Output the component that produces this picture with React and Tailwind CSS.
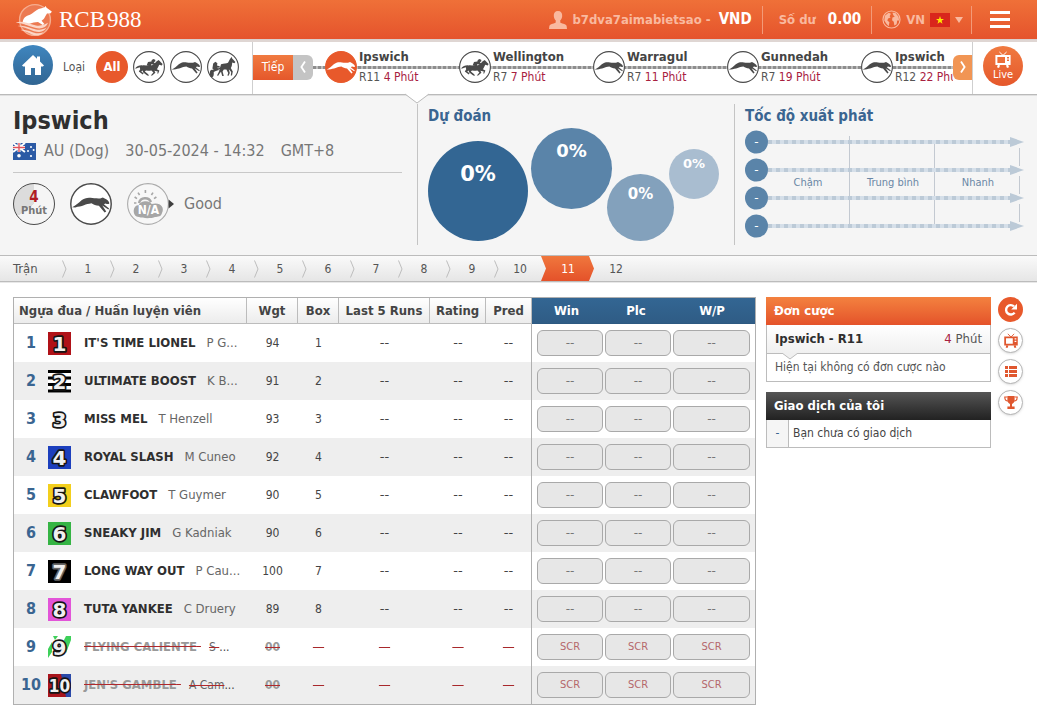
import React, { useState } from 'react';

const upcoming = [
  { venue: 'Ipswich', race: 'R11', time: '4 Phút', type: 'dog', active: true },
  { venue: 'Wellington', race: 'R7', time: '7 Phút', type: 'horse' },
  { venue: 'Warragul', race: 'R7', time: '11 Phút', type: 'dog' },
  { venue: 'Gunnedah', race: 'R7', time: '19 Phút', type: 'dog' },
  { venue: 'Ipswich', race: 'R12', time: '22 Phút', type: 'dog' },
];

const runners = [
  { no: 1, name: "IT'S TIME LIONEL", trainer: 'P G...', wgt: '94', box: '1' },
  { no: 2, name: 'ULTIMATE BOOST', trainer: 'K B...', wgt: '91', box: '2' },
  { no: 3, name: 'MISS MEL', trainer: 'T Henzell', wgt: '93', box: '3' },
  { no: 4, name: 'ROYAL SLASH', trainer: 'M Cuneo', wgt: '92', box: '4' },
  { no: 5, name: 'CLAWFOOT', trainer: 'T Guymer', wgt: '90', box: '5' },
  { no: 6, name: 'SNEAKY JIM', trainer: 'G Kadniak', wgt: '90', box: '6' },
  { no: 7, name: 'LONG WAY OUT', trainer: 'P Cau...', wgt: '100', box: '7' },
  { no: 8, name: 'TUTA YANKEE', trainer: 'C Druery', wgt: '89', box: '8' },
  { no: 9, name: 'FLYING CALIENTE', trainer: 'S\u00a0', wgt: '00', scratched: true },
  { no: 10, name: "JEN'S GAMBLE", trainer: 'A Cam', wgt: '00', scratched: true },
];

const races = [1, 2, 3, 4, 5, 6, 7, 8, 9, 10, 11, 12];

const rugColors = {
  1: '#b01218',
  2: '#ffffff',
  3: 'none',
  4: '#1c3fbd',
  5: '#f3cf1d',
  6: '#35b444',
  7: '#000000',
  8: '#e254d8',
  9: '#ffffff',
  10: '#a8141c',
};

const Silhouette = ({ type }) => {
  if (type === 'horse') {
    return (
      <g fill="currentColor">
        <path d="M2 17.4 C4 15 6.4 14.2 9.4 14.4 C12 14 14 14.8 17 14.6 C20 14.4 21.6 12.8 23 11 C24 9.8 25 9.6 25.6 9 L26.4 9.8 L29.6 13 L28.8 14.4 L26.2 13.8 C25.4 15.4 25 17 23.8 18.2 L26.4 19.6 L25.2 22.6 L24.2 22.4 L24.8 20.4 L21.4 19.8 L22.4 21.8 L19.2 24.4 L17.8 24.6 L20.4 21.6 L18.4 19.6 C16.4 19.8 14.6 19.4 13 19.4 L11.8 20.6 L15.2 23.2 L16 24.8 L14.2 24.6 L10 21.2 L9.8 19.6 L8.2 20.4 L10.6 22.2 L9.8 23.4 L5.8 20.4 L7.2 18.2 L6.8 16.2 L3.2 17.4 Z" />
        <path d="M13.6 14.4 L15 11 L18.4 10.6 L18.8 9 L20.4 8 L22.2 8.8 L22.4 10.2 L20.8 11.2 L22.4 12.8 L21 14 L18.4 13 L18 15.4 Z" />
      </g>
    );
  }
  if (type === 'harness') {
    return (
      <g fill="currentColor">
        <path d="M14 13.2 C17 12.6 19.4 12.8 21 11.8 C22 10 22.6 8.4 23.8 7 L24.4 5.8 L25.2 7.4 L28.4 11 L27.4 12.2 L25.2 11.4 C25 13.6 25 15.4 23.8 17 L25.8 20.4 L25 24.6 L23.8 24.6 L24.2 21 L21.8 18.2 L22.8 22 L21.6 24.8 L20.4 24.6 L21.2 22 L19.4 18.6 L16.8 18.4 L15.6 20.6 L16.8 25 L15.2 25 L14 20.8 L12.6 22.6 L11.2 24.8 L10 24.4 L12 20.6 L12.8 17.4 Z" />
        <path d="M6.2 12.4 L8.4 10.8 L10.4 12.2 L10 14.4 L12.8 15.2 L12.6 16.8 L10.4 16.6 L11.6 19.2 L7.6 19.4 L5.4 17.4 Z" />
        <ellipse cx="4.8" cy="22.4" rx="2" ry="3.6" />
        <path d="M4 19.2 L14 16.4 V17.6 L4.6 22 Z" />
      </g>
    );
  }
  return (
    <path
      fill="currentColor"
      d="M1.6 18.4 C4.4 17.2 6.6 15.2 8.8 13.2 C11 11.2 14 10.8 17 11.4 C19 11.8 21.4 11.6 23 11.8 L25 11 L26.8 12 C28.4 12.8 29.6 13.8 30 15.4 C29.4 16.4 28.4 16 27 15.6 L25.8 16.2 L29.8 19.4 L29.2 20.2 L24.6 17.2 L27.6 21.8 L26.4 22.4 L22 17.4 C19.8 17 18 16.6 16.4 15.4 C14 16 12.4 15.8 10.6 17 C8.6 17.8 6.4 18 4 18.6 Z"
    />
  );
};

const RaceTypeIcon = ({ type, active, className }) => (
  <svg viewBox="0 0 32 32" className={className} aria-hidden="true">
    <circle cx="16" cy="16" r="15.4" fill={active ? '#e8592b' : '#ffffff'} stroke={active ? '#e8592b' : '#4a4a4a'} strokeWidth="1.1" />
    <Silhouette type={type} />
  </svg>
);

const TvIcon = ({ className }) => (
  <svg viewBox="0 0 18 18" className={className} fill="none" stroke="currentColor" aria-hidden="true">
    <path d="M5.4 1 L9 4.4 L12.6 1" strokeWidth="1" />
    <path fillRule="evenodd" d="M1.4 4 H16.6 V14 H1.4 Z M3.4 6 V12 H11 V6 Z M13 6 H15 V7.4 H13 Z M13 8.6 H15 V10 H13 Z" fill="currentColor" stroke="none" />
    <path d="M5 14 L4 16.6 M13 14 L14 16.6" strokeWidth="2.2" />
  </svg>
);

const Logo = () => (
  <a href="#home" className="flex items-center gap-1.5 text-white">
    <svg viewBox="0 0 38 34" className="h-[34px] w-[38px]" aria-hidden="true">
      <circle cx="20" cy="17" r="15.4" fill="#ec7a52" stroke="#f6ad8f" strokeWidth="1.4" />
      <path d="M7.6 20 C8 14.4 11 13 15 11.8 C18 10.6 20 7.6 23.6 6 L29.4 4.4 L30.6 3 L31.6 4.8 L36.8 8.4 L35.8 10.2 L32 10.4 L30.2 13.6 C29.4 16 27.6 17 26.6 17.8 L29.4 21 L27.8 22 L23 19 C20 19.4 17.4 19.4 15.4 20.6 L11 21.6 Z" fill="#fff" />
      <path d="M0.6 19.4 C8 17.2 15 21 21 22.4 C26 23.4 30 21.4 33 19.8 C31 25 26 26.4 20 24.8 C13 22.6 7 20 0.6 19.4 Z" fill="#fbd5c6" />
      <path d="M2.6 23 C9 21.6 15 25 21 26.4 C25 27.2 29 26.4 31.6 24.6 C29 29 25 29.8 19 28.2 C13 26 8 23.4 2.6 23 Z" fill="#fbd5c6" />
      <path d="M5.6 27 C11 26.2 16 29.2 21 30.2 C24 30.6 26 30.2 28.4 29.2 C25 33 21 32.8 17 31.4 C13 29.8 9 27.6 5.6 27 Z" fill="#fbd5c6" />
    </svg>
    <span className="flex gap-0.5 font-['Liberation_Serif',serif] text-[23px] leading-8">
      <span>RCB</span>
      <span>988</span>
    </span>
  </a>
);

const TopBar = () => (
  <header className="flex h-10 items-center justify-between border-b border-[#d9cfcc] bg-linear-to-b from-[#ef7038] to-[#e5532c] pl-[15px] text-[#f9b99f]">
    <Logo />
    <div className="flex items-center text-[13px] font-bold">
      <svg viewBox="0 0 18 18" className="mr-[5px] size-[18px]" fill="currentColor" aria-hidden="true">
        <path d="M9 0 C12 0 13.4 2 13.2 5 C13 7.4 12.2 8.6 11.2 9.6 L11.4 11.8 C14 12.8 17 13.4 17.6 14.8 L18 18 H0 L0.4 14.8 C1 13.4 4 12.8 6.6 11.8 L6.8 9.6 C5.8 8.6 5 7.4 4.8 5 C4.6 2 6 0 9 0 Z" />
      </svg>
      <span>b7dva7aimabietsao -</span>
      <span className="ml-2 text-[15px] text-white">VND</span>
      <span className="mx-2.5 h-7 w-px bg-[#f39a78]" />
      <span className="ml-1.5">Số dư</span>
      <span className="ml-3 text-[15px] text-white">0.00</span>
      <span className="mx-2.5 h-7 w-px bg-[#f39a78]" />
      <button type="button" className="flex items-center gap-[5px]">
        <svg viewBox="0 0 20 20" className="size-[19px]" fill="none" aria-hidden="true">
          <circle cx="10" cy="10" r="9" stroke="currentColor" strokeWidth="1.2" />
          <path d="M3 6 L7 3 L9.4 4 L8 6.6 L9 8 L6.4 9 L5.6 11 L7.8 13 L7 17 L4.6 14.4 L2.4 11 Z" fill="currentColor" />
          <path d="M11 3 L14 3 L17.4 7 L18 11 L16 11 L15.4 15 L13 16.4 L12.4 12.4 L10.6 10.8 L11 8 L13.4 7 L12 5.6 Z" fill="currentColor" />
        </svg>
        <span>VN</span>
        <svg viewBox="0 0 20 14" className="h-3.5 w-5" aria-hidden="true">
          <rect width="20" height="14" fill="#d9251c" />
          <path d="M10 3 L11 6 H14 L11.6 7.8 L12.5 10.8 L10 9 L7.5 10.8 L8.4 7.8 L6 6 H9 Z" fill="#ffe600" />
        </svg>
        <svg viewBox="0 0 8 6" className="h-1.5 w-2" fill="currentColor" aria-hidden="true">
          <path d="M0 0 H8 L4 6 Z" />
        </svg>
      </button>
      <span className="ml-2 h-7 w-px bg-[#f39a78]" />
      <button type="button" aria-label="Menu" className="mr-[27px] ml-[18px] flex w-5 flex-col gap-1">
        <span className="h-[3px] bg-white" />
        <span className="h-[3px] bg-white" />
        <span className="h-[3px] bg-white" />
      </button>
    </div>
  </header>
);

const NavBar = () => (
  <nav className="relative flex h-[55px] items-center border-t-2 border-b border-t-[#dfd6d3] border-b-[#bababa] bg-white">
    <div className="flex h-full w-[253px] shrink-0 items-center border-r border-[#cfcfcf] pb-0.5 pl-[13px]">
      <a href="#home" aria-label="Home" className="mt-[3px] flex size-10 items-center justify-center self-start rounded-full bg-linear-to-b from-[#3f86bf] to-[#316592] text-white">
        <svg viewBox="0 0 22 20" className="h-5 w-[22px]" fill="currentColor" aria-hidden="true">
          <path d="M11 0 L15 3.8 V1.4 H18 V6.6 L22 10.4 L20.8 11.4 H19 V20 H13 V13 H9 V20 H3 V11.4 H1.2 L0 10.4 Z" />
        </svg>
      </a>
      <span className="ml-2.5 text-xs text-[#555]">Loại</span>
      <div className="ml-[11px] flex gap-[5px] text-[#4a4a4a]">
        <button type="button" className="size-8 rounded-full bg-[#e8592b] text-[13px] font-bold text-white">All</button>
        <button type="button" aria-label="Horse"><RaceTypeIcon type="horse" className="size-8" /></button>
        <button type="button" aria-label="Dog"><RaceTypeIcon type="dog" className="size-8" /></button>
        <button type="button" aria-label="Harness"><RaceTypeIcon type="harness" className="size-8" /></button>
      </div>
    </div>
    <button type="button" className="mb-0.5 h-[25px] w-10 shrink-0 bg-linear-to-b from-[#f07a40] to-[#e5572b] text-xs text-white">Tiếp</button>
    <button type="button" aria-label="Previous" className="mb-0.5 flex h-[25px] w-5 shrink-0 items-center justify-center rounded-r-md bg-[#c4c4c4] text-white">
      <svg viewBox="0 0 6 12" className="h-3 w-1.5" fill="none" stroke="currentColor" strokeWidth="1.8" aria-hidden="true"><path d="M5 0.5 L1.4 6 L5 11.5" /></svg>
    </button>
    <div className="relative h-full min-w-0 flex-1 overflow-hidden">
      <div className="absolute inset-x-0 top-6 h-[3px] bg-[repeating-linear-gradient(90deg,#8d8d8d_0_3px,#bdbdbd_3px_5px)]" />
      <ul className="relative flex h-full items-center pb-0.5 pl-3">
        {upcoming.map((item, i) => (
          <li key={i} className="w-[134px] shrink-0">
            <a href="#race" className="flex items-center gap-0.5">
              <RaceTypeIcon
                type={item.type}
                active={item.active}
                className={item.active ? 'size-8 shrink-0 text-white' : 'size-8 shrink-0 text-[#4a4a4a]'}
              />
              <span className="flex flex-col text-xs leading-5">
                <span className="text-[13px] leading-5 font-bold text-[#444]">{item.venue}</span>
                <span className="text-[#555]">
                  {item.race} <span className="text-[#a8203f]">{item.time}</span>
                </span>
              </span>
            </a>
          </li>
        ))}
      </ul>
    </div>
    <button type="button" aria-label="Next" className="mb-0.5 flex h-[25px] w-[19px] shrink-0 items-center justify-center rounded-l-md bg-[#f19554] text-white">
      <svg viewBox="0 0 6 12" className="h-3 w-1.5" fill="none" stroke="currentColor" strokeWidth="1.8" aria-hidden="true"><path d="M1 0.5 L4.6 6 L1 11.5" /></svg>
    </button>
    <div className="flex h-full w-[65px] shrink-0 items-start border-l border-[#cfcfcf] pt-1 pl-2.5">
      <button type="button" className="flex size-10 flex-col items-center justify-center rounded-full bg-linear-to-b from-[#f07a40] to-[#e5572b] text-[11px] leading-3 text-white">
        <TvIcon className="size-[18px]" />
        Live
      </button>
    </div>
    <svg viewBox="0 0 26 11" className="absolute top-[51px] left-[404px] z-10 h-[11px] w-[26px]" aria-hidden="true">
      <path d="M0 0 L13 10 L26 0 Z" fill="#fff" />
      <path d="M1 1 L13 10 L25 1" fill="none" stroke="#bababa" />
    </svg>
  </nav>
);

const MeetingInfo = () => (
  <section className="min-w-0 flex-1 pr-[15px] pl-[13px] text-[#777]">
    <div className="border-b border-[#c8c8c8] pb-[7px]">
      <h1 className="pt-[9px] text-[25px] leading-8 font-bold text-[#2f2f2f]">Ipswich</h1>
      <div className="flex items-center text-base leading-7">
        <svg viewBox="0 0 23 17" className="mr-2 h-[17px] w-[23px]" aria-hidden="true">
          <rect width="23" height="17" fill="#2b5aa5" />
          <path d="M0 0 L12 9 M12 0 L0 9" stroke="#fff" strokeWidth="2" />
          <path d="M6 0 V9 M0 4.5 H12" stroke="#fff" strokeWidth="3" />
          <path d="M6 0 V9 M0 4.5 H12" stroke="#e0525a" strokeWidth="1.4" />
          <circle cx="6" cy="12.8" r="1.8" fill="#fff" />
          <circle cx="18" cy="4" r="1" fill="#fff" />
          <circle cx="15" cy="8" r="1" fill="#fff" />
          <circle cx="20.6" cy="7" r="1" fill="#fff" />
          <circle cx="18" cy="13" r="1.1" fill="#fff" />
        </svg>
        <span>AU (Dog)</span>
        <span className="ml-4">30-05-2024 - 14:32</span>
        <span className="ml-4">GMT+8</span>
      </div>
    </div>
    <div className="flex items-center pt-2.5">
      <div className="flex size-[42px] flex-col items-center justify-center rounded-full border border-[#4a4a4a] bg-[conic-gradient(#f5f5f5_0_65%,#dcdcdc_65%)] font-bold">
        <span className="text-[15px] leading-[14px] text-[#b01c24]">4</span>
        <span className="text-[11px] leading-[14px]">Phút</span>
      </div>
      <RaceTypeIcon type="dog" className="ml-[15px] size-[42px] text-[#4a4a4a]" />
      <svg viewBox="0 0 48 42" className="ml-[15px] h-[42px] w-12" aria-hidden="true">
        <circle cx="21" cy="21" r="20.4" fill="#f7f7f7" stroke="#ababab" strokeWidth="1.1" />
        <g stroke="#a6a6a6" fill="none" strokeWidth="1.6">
          <path d="M12 20 A6.4 6.4 0 0 1 24 19" strokeWidth="2.4" />
          <path d="M18.4 7 V10 M11 9.6 L12.6 12 M26 9.6 L24.4 12 M7.6 14 L10 15.6 M29.4 14 L27 15.6 M7 20 H9.4" />
        </g>
        <path d="M12 34 C5 34 5 22 12 22 C13 17.6 23 17 24.6 21 C33 18.6 38 24 35 30 C34 34 31 33.6 28 34 C25 35.6 16 35.6 12 34 Z" fill="#a6a6a6" />
        <path d="M41.6 16.4 L47 21 L41.6 25.6 Z" fill="#3f3f3f" />
        <text x="21.4" y="31.4" textAnchor="middle" fill="#fff" className="text-xs font-bold">N/A</text>
      </svg>
      <span className="ml-[9px] text-base">Good</span>
    </div>
  </section>
);

const Prediction = () => (
  <section className="mt-2 mb-2.5 w-[318px] shrink-0 border-x border-[#c4c4c4] pl-2.5">
    <h2 className="text-[15px] leading-6 font-bold text-[#3a6591]">Dự đoán</h2>
    <div className="flex items-start text-center font-['DejaVu_Sans',sans-serif] font-bold text-white">
      <div className="mt-[13px] size-[100px] rounded-full bg-[#336693] pt-[19px] text-[21px] leading-7">0%</div>
      <div className="ml-[3px] size-[81px] rounded-full bg-[#5a84a9] pt-[11px] text-lg leading-6">0%</div>
      <div className="mt-[46px] -ml-[5px] size-[67px] rounded-full bg-[#83a1bc] pt-2.5 text-[15px] leading-5">0%</div>
      <div className="mt-[21px] -ml-[5px] size-[50px] rounded-full bg-[#a9bdd0] pt-[5px] text-[13px] leading-5">0%</div>
    </div>
  </section>
);

const StartSpeed = () => (
  <section className="w-[302px] shrink-0 pt-2 pl-2.5">
    <h2 className="text-[15px] leading-6 font-bold text-[#3a6591]">Tốc độ xuất phát</h2>
    <svg viewBox="0 0 280 112" className="mt-0.5 h-28 w-[280px] text-[11px]" aria-label="Tốc độ xuất phát">
      <g stroke="#c3c9d1">
        <path d="M104.5 6 V96" />
        <path d="M189.5 14 V96" />
        <path d="M274.5 18 V92" strokeDasharray="18 10" />
      </g>
      {[12, 40, 68, 96].map((y) => (
        <g key={y}>
          <path d={`M23 ${y} H266`} stroke="#d5dfe9" strokeWidth="4" />
          <path d={`M23 ${y} H266`} stroke="#bccad7" strokeWidth="4" strokeDasharray="4" />
          <path d={`M265 ${y - 5} L279 ${y} L265 ${y + 5} Z`} fill="#bccad7" />
          <circle cx="11.5" cy={y} r="11.5" fill="#5a84a9" />
          <text x="11.5" y={y + 4} textAnchor="middle" fill="#fff" className="font-['DejaVu_Sans',sans-serif] text-xs">-</text>
        </g>
      ))}
      <g fill="#6a87a5" textAnchor="middle">
        <text x="63" y="56">Chậm</text>
        <text x="148" y="56">Trung bình</text>
        <text x="233" y="56">Nhanh</text>
      </g>
    </svg>
  </section>
);

const TabArrow = () => (
  <svg viewBox="0 0 5 18" className="absolute top-1 -right-[3px] h-[18px] w-[5px]" fill="none" stroke="#bdbdbd" aria-hidden="true">
    <path d="M0.5 0.5 L4 9 L0.5 17.5" />
  </svg>
);

const RaceTabs = ({ current, onSelect }) => (
  <div className="flex h-[27px] border-y border-[#bcbcbc] bg-linear-to-b from-[#fafafa] to-[#e6e6e6] text-xs text-[#555]">
    <div className="relative w-16 pl-[13px] text-[13px] leading-[26px]">
      Trận
      <TabArrow />
    </div>
    {races.map((race) => (
      <button
        key={race}
        type="button"
        onClick={() => onSelect(race)}
        className={race === current ? 'relative w-12 text-white' : 'relative w-12'}
      >
        {race === current && (
          <svg viewBox="0 0 54 25" preserveAspectRatio="none" className="absolute top-0 -left-[3px] h-[25px] w-[54px]" aria-hidden="true">
            <defs>
              <linearGradient id="activeRace" x1="0" y1="0" x2="0" y2="1">
                <stop offset="0" stopColor="#f0773d" />
                <stop offset="1" stopColor="#e4522a" />
              </linearGradient>
            </defs>
            <path d="M0 0 H48 L53 12.5 L48 25 H0 L5 12.5 Z" fill="url(#activeRace)" />
          </svg>
        )}
        <span className="relative">{race}</span>
        {race < current - 1 && <TabArrow />}
      </button>
    ))}
  </div>
);

const RugNumber = ({ no }) => (
  <svg viewBox="0 0 23 23" className="size-[23px]" role="img" aria-label={`Rug ${no}`}>
    <rect width="23" height="23" fill={rugColors[no]} />
    {no === 2 && <path d="M0 1.5 H23 M0 8 H23 M0 14.5 H23 M0 21 H23" stroke="#000" strokeWidth="3" />}
    {no === 9 && <path d="M0 22 V13 L4 6 V16 Z M5 0 H10 L7 4 Z M16 4 L18 0 H23 V4 L18 17 Z" fill="#3ed05a" />}
    {no === 10 && <path d="M13 0 H23 V23 H18 Z" fill="#2a49a8" />}
    <text
      x="11.5"
      y={no === 10 ? 17.8 : 18.8}
      textAnchor="middle"
      fill="#f0f0f0"
      stroke={no === 7 ? '#666666' : '#151515'}
      strokeWidth="3.4"
      strokeLinejoin="round"
      paintOrder="stroke"
      className={no === 10 ? 'text-[17px] font-bold' : "font-['DejaVu_Sans',sans-serif] text-[20px] font-bold"}
    >
      {no}
    </text>
  </svg>
);

const headCell = 'border-r border-b border-[#bcbcbc] bg-linear-to-b from-white to-[#ececec]';
const betHead = 'border-b border-[#2d5981] bg-linear-to-b from-[#336693] to-[#2f5c85] pr-0.5 text-white';

const Dashes = ({ scratched }) => {
  if (scratched) {
    return <span className="text-[#a8282c] line-through decoration-[#a8282c]">--&nbsp;</span>;
  }
  return <span className="font-['DejaVu_Sans',sans-serif] text-[13px]">--</span>;
};

const RunnersTable = () => (
  <table className="w-full table-fixed border-separate border-spacing-0 border border-[#b0b0b0] text-xs text-[#444]">
    <colgroup>
      <col />
      <col className="w-[51px]" />
      <col className="w-[41px]" />
      <col className="w-[91px]" />
      <col className="w-[56px]" />
      <col className="w-[46px]" />
      <col className="w-[71px]" />
      <col className="w-[68px]" />
      <col className="w-[84px]" />
    </colgroup>
    <thead className="text-[13px]">
      <tr className="h-[26px]">
        <th className={`${headCell} pl-[5px] text-left`}>Ngựa đua / Huấn luyện viên</th>
        <th className={headCell}>Wgt</th>
        <th className={headCell}>Box</th>
        <th className={headCell}>Last 5 Runs</th>
        <th className={headCell}>Rating</th>
        <th className={headCell}>Pred</th>
        <th className={betHead}>Win</th>
        <th className={betHead}>Plc</th>
        <th className={betHead}>W/P</th>
      </tr>
    </thead>
    <tbody className="text-center">
      {runners.map((runner) => (
        <tr key={runner.no} className="h-[38px] even:bg-[#eeeeee]">
          <td className="text-left">
            <div className="flex items-center whitespace-nowrap">
              <span className="w-[34px] shrink-0 text-center text-base font-bold text-[#3a6591]">{runner.no}</span>
              <RugNumber no={runner.no} />
              {runner.scratched ? (
                <span className="ml-[13px]">
                  <span className="text-[13px] font-bold text-[#999] line-through decoration-[#b0282c]">{runner.name}&nbsp;</span>
                  <span className="ml-2 text-[#666] line-through decoration-[#b0282c]">{runner.trainer}</span>...
                </span>
              ) : (
                <span className="ml-[13px]">
                  <span className="text-[13px] font-bold text-[#2f2f2f]">{runner.name}</span>
                  <span className="ml-[11px] text-[13px] text-[#666]">{runner.trainer}</span>
                </span>
              )}
            </div>
          </td>
          <td className={runner.scratched ? 'font-bold text-[#999] line-through decoration-[#b0282c]' : ''}>{runner.wgt}</td>
          <td>{runner.scratched ? <Dashes scratched /> : runner.box}</td>
          <td><Dashes scratched={runner.scratched} /></td>
          <td><Dashes scratched={runner.scratched} /></td>
          <td className="border-r border-[#b0b0b0]"><Dashes scratched={runner.scratched} /></td>
          {['Win', 'Plc', 'W/P'].map((bet) => (
            <td key={bet} className={bet === 'Win' ? 'pl-[5px]' : bet === 'W/P' ? 'pr-[5px] pl-0.5' : 'pl-0.5'}>
              <button
                type="button"
                disabled
                aria-label={`${bet} ${runner.name}`}
                className={
                  runner.scratched
                    ? 'block h-[26px] w-full rounded-md border border-[#a9a9a9] bg-[#e7e7e7] text-[11px] text-[#b5676b]'
                    : "block h-[26px] w-full rounded-md border border-[#a9a9a9] bg-[#e7e7e7] font-['DejaVu_Sans',sans-serif] text-xs text-[#777]"
                }
              >
                {runner.scratched ? 'SCR' : '--'}
              </button>
            </td>
          ))}
        </tr>
      ))}
    </tbody>
  </table>
);

const Sidebar = () => (
  <aside className="flex w-[225px] shrink-0 flex-col gap-2.5 text-xs text-[#555]">
    <div>
      <h3 className="bg-linear-to-b from-[#f3813f] to-[#e4522a] pl-2 text-[13px] leading-7 font-bold text-white">Đơn cược</h3>
      <div className="border border-t-0 border-[#bcbcbc] bg-white">
        <div className="relative flex h-[29px] items-center justify-between border-b border-[#bcbcbc] bg-linear-to-b from-white to-[#f0f0f0] px-2">
          <span className="text-[13px] font-bold text-[#2f2f2f]">Ipswich - R11</span>
          <span className="text-[13px]">
            <span className="text-[#a8203f]">4</span> Phút
          </span>
          <svg viewBox="0 0 16 7" className="absolute top-7 left-[15px] h-[7px] w-4" aria-hidden="true">
            <path d="M0 0 L8 6 L16 0" fill="#f0f0f0" stroke="#bcbcbc" />
          </svg>
        </div>
        <p className="pl-2 leading-[27px]">Hiện tại không có đơn cược nào</p>
      </div>
    </div>
    <div>
      <h3 className="bg-linear-to-b from-[#565656] to-[#222222] pl-2 text-[13px] leading-7 font-bold text-white">Giao dịch của tôi</h3>
      <div className="flex border border-t-0 border-[#bcbcbc] bg-white leading-[27px]">
        <span className="w-[22px] border-r border-[#bcbcbc] bg-[#f5f5f5] text-center text-[#3a6591]">-</span>
        <span className="pl-1 text-[#444]">Bạn chưa có giao dịch</span>
      </div>
    </div>
  </aside>
);

const sideButton = 'flex size-[25px] items-center justify-center rounded-full border border-[#b5b5b5] bg-white text-[#e0572f] shadow-sm';

const SideActions = () => (
  <div className="flex w-[25px] shrink-0 flex-col gap-1.5">
    <button type="button" aria-label="Refresh" className="flex size-[25px] items-center justify-center rounded-full bg-[#e8592b] text-white">
      <svg viewBox="0 0 14 14" className="size-3.5" aria-hidden="true">
        <path d="M10.6 9.6 A4.7 4.7 0 1 1 10 3.4" fill="none" stroke="currentColor" strokeWidth="2.4" />
        <path d="M13 0.8 V6.6 H7.2 Z" fill="currentColor" />
      </svg>
    </button>
    <button type="button" aria-label="Live TV" className={sideButton}>
      <TvIcon className="size-4" />
    </button>
    <button type="button" aria-label="Bet list" className={sideButton}>
      <svg viewBox="0 0 12 11" className="h-[11px] w-3" fill="currentColor" aria-hidden="true">
        <path d="M0 0 H3 V3 H0 Z M4 0 H12 V3 H4 Z M0 4 H3 V7 H0 Z M4 4 H12 V7 H4 Z M0 8 H3 V11 H0 Z M4 8 H12 V11 H4 Z" />
      </svg>
    </button>
    <button type="button" aria-label="Results" className={sideButton}>
      <svg viewBox="0 0 14 13" className="h-[13px] w-3.5" aria-hidden="true">
        <path d="M3.4 0 H10.6 V4 C10.6 6.4 9 7.4 8 8 V10.6 H10.6 V13 H3.4 V10.6 H6 V8 C5 7.4 3.4 6.4 3.4 4 Z" fill="currentColor" />
        <path d="M3.4 1 H0.8 C0.8 4 2 5 4 5 M10.6 1 H13.2 C13.2 4 12 5 10 5" fill="none" stroke="currentColor" strokeWidth="1.2" />
      </svg>
    </button>
  </div>
);

const App = () => {
  const [currentRace, setCurrentRace] = useState(11);

  return (
    <div className="min-h-screen bg-white font-['DejaVu_Sans_Condensed','Noto_Sans',sans-serif]">
      <TopBar />
      <NavBar />
      <div className="flex h-40 border-t border-[#e0e0e0] bg-[#f5f5f5]">
        <MeetingInfo />
        <Prediction />
        <StartSpeed />
      </div>
      <RaceTabs current={currentRace} onSelect={setCurrentRace} />
      <main className="flex items-start border-t border-[#e8e8e8] pt-3.5 pr-3.5 pb-4 pl-[13px]">
        <div className="min-w-0 flex-1">
          <RunnersTable />
        </div>
        <div className="ml-2.5 flex gap-[7px]">
          <Sidebar />
          <SideActions />
        </div>
      </main>
    </div>
  );
};

export default App;
